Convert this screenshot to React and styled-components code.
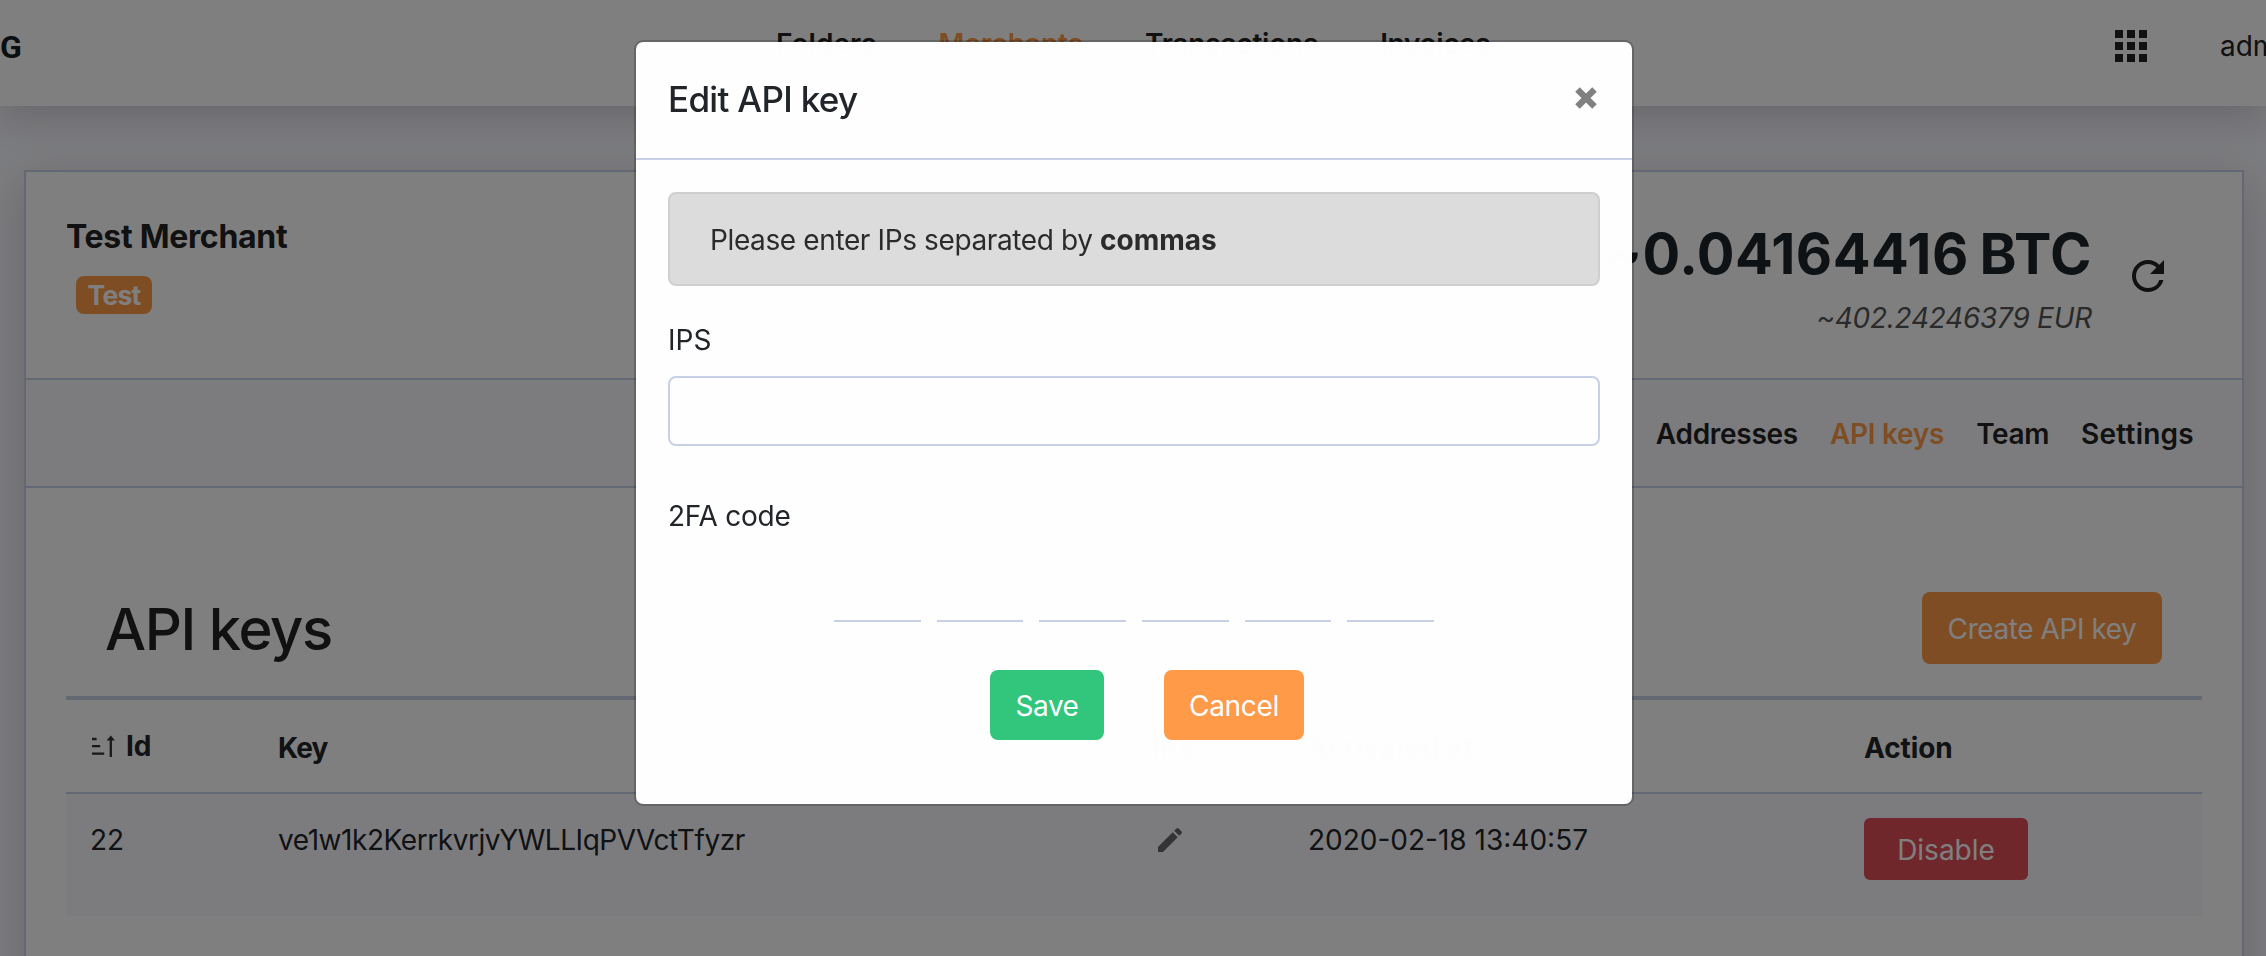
import React from "react";
import styled, { createGlobalStyle } from "styled-components";
import { MdApps, MdRefresh, MdEdit } from "react-icons/md";

const GlobalStyle = createGlobalStyle`
  * { box-sizing: border-box; }
  html, body { margin: 0; height: 100%; overflow: hidden; }
  body {
    font-family: Inter, "Liberation Sans", sans-serif;
    font-size: 28px;
    line-height: 40px;
    color: #212529;
    background: #f8f9ff;
  }
`;

const orange = "#ff9a48";
const line = "#c7d0e6";

const Page = styled.div`
  height: 956px;
  overflow: hidden;
`;

const TopBar = styled.header`
  display: grid;
  grid-template-columns: 776px 1fr 159px;
  align-items: center;
  height: 106px;
  padding-bottom: 14px;
  background: #fff;
  box-shadow: 0 8px 44px rgba(40, 20, 35, 0.21);
`;

const Brand = styled.div`
  font: 700 32px/40px Roboto, sans-serif;
  color: #161d22;
  padding-top: 2px;
`;

const Nav = styled.nav`
  display: flex;
  gap: 62px;
  margin-top: -4px;
`;

const NavLink = styled.a`
  font-weight: 600;
  color: ${(p) => (p.$active ? orange : "#222")};
  letter-spacing: ${(p) => p.$track || 0}px;
`;

const Actions = styled.div`
  display: flex;
  align-items: center;
  gap: 65px;
  overflow: hidden;
  color: #222;
  svg { flex: none; }
`;

const Card = styled.section`
  width: 2220px;
  height: 860px;
  margin: 64px 0 0 24px;
  border: 2px solid ${line};
  background: #fff;
  box-shadow: 0 14px 44px rgba(50, 20, 30, 0.2);
`;

const Summary = styled.div`
  display: flex;
  justify-content: space-between;
  height: 206px;
  padding: 0 70px 0 40px;
`;

const Merchant = styled.div`
  padding-top: 45px;
`;

const MerchantName = styled.h2`
  margin: 0 0 19px;
  font-size: 32px;
  line-height: 40px;
  font-weight: 700;
  letter-spacing: -0.3px;
  color: #222;
`;

const Badge = styled.span`
  display: block;
  width: 76px;
  height: 38px;
  margin-left: 10px;
  border-radius: 8px;
  background: ${orange};
  color: #fff;
  font-size: 26.5px;
  line-height: 38px;
  font-weight: 700;
  letter-spacing: -0.8px;
  text-align: center;
`;

const Balance = styled.div`
  display: flex;
  gap: 32px;
  color: #222;
  svg { margin-top: 80px; }
`;

const Amounts = styled.div`
  padding-top: 48px;
  text-align: right;
`;

const Btc = styled.div`
  font-size: 56px;
  line-height: 68px;
  font-weight: 700;
  color: #1e2529;
  letter-spacing: 0.5px;
  word-spacing: -3px;
`;

const Eur = styled.div`
  margin-top: 10px;
  font-style: italic;
  color: #555;
  letter-spacing: -0.26px;
`;

const Tabs = styled.nav`
  display: flex;
  align-items: center;
  justify-content: flex-end;
  gap: 32px;
  height: 110px;
  padding: 2px 48px 0 0;
  border: solid ${line};
  border-width: 2px 0;
  background: #f8f9ff;
`;

const Content = styled.div`
  padding: 0 40px;
`;

const ContentHead = styled.div`
  display: flex;
  justify-content: space-between;
  height: 208px;
  padding: 104px 40px 0 39px;
`;

const Heading = styled.h1`
  margin: 0;
  font-size: 58px;
  line-height: 74px;
  font-weight: 500;
  letter-spacing: -1.45px;
  color: #222;
`;

const Button = styled.button`
  width: ${(p) => p.$w}px;
  height: ${(p) => p.$h}px;
  padding: 2px 0 0;
  border: 0;
  border-radius: ${(p) => p.$r || 8}px;
  background: ${(p) => p.$bg};
  color: #fff;
  font: inherit;
  letter-spacing: ${(p) => p.$track || 0}px;
`;

const TableRow = styled.div`
  display: grid;
  grid-template-columns: 188px 874px 156px 556px 1fr;
`;

const HeadRow = styled(TableRow)`
  align-items: center;
  height: 98px;
  border-top: 4px solid ${line};
  border-bottom: 2px solid ${line};
  font-weight: 700;
`;

const BodyRow = styled(TableRow)`
  height: 122px;
  background: #f8f9ff;
`;

const HeadCell = styled.div`
  display: flex;
  align-items: center;
  gap: 10px;
  padding: ${(p) => (p.$sort ? 0 : 4)}px 0 0 24px;
  letter-spacing: ${(p) => p.$track || 0}px;
`;

const Cell = styled.div`
  padding: ${(p) => p.$top || 26}px 0 0 ${(p) => p.$left || 24}px;
  letter-spacing: ${(p) => p.$track || 0}px;
  svg { display: block; color: #666; }
`;

const Backdrop = styled.div`
  position: fixed;
  inset: 0;
  display: flex;
  justify-content: center;
  align-items: flex-start;
  padding: 40px 0 0 2px;
  background: rgba(0, 0, 0, 0.5);
`;

const Dialog = styled.div`
  width: 1000px;
  height: 766px;
  border: 2px solid rgba(0, 0, 0, 0.2);
  border-radius: 9px;
  background: rgba(255, 255, 255, 0.993);
  background-clip: padding-box;
`;

const DialogHead = styled.div`
  display: flex;
  align-items: center;
  justify-content: space-between;
  height: 118px;
  padding: 0 34px 2px 32px;
  border-bottom: 2px solid ${line};
`;

const DialogTitle = styled.h3`
  margin: 0;
  font-size: 35px;
  line-height: 50px;
  font-weight: 500;
  letter-spacing: -0.7px;
`;

const CloseIcon = styled.svg`
  width: 24px;
  height: 24px;
  margin-top: -2px;
  stroke: #808080;
  stroke-width: 6.4;
`;

const DialogBody = styled.div`
  padding: 32px;
`;

const Notice = styled.div`
  display: flex;
  align-items: center;
  height: 94px;
  padding: 2px 0 0 40px;
  border: 2px solid #cfcfcf;
  border-radius: 8px;
  background: #dcdcdc;
  color: #2b2b2b;
  white-space: pre;
  letter-spacing: -0.38px;
  b { letter-spacing: 0; }
`;

const Label = styled.label`
  display: block;
  margin: ${(p) => p.$gap}px 0 16px;
  letter-spacing: ${(p) => p.$track || 0}px;
`;

const Input = styled.input`
  display: block;
  width: 100%;
  height: 70px;
  border: 2px solid ${line};
  border-radius: 8px;
  background: transparent;
  outline: 0;
`;

const CodeFields = styled.div`
  display: grid;
  grid-template-columns: repeat(6, 1fr);
  gap: 16px;
  width: 600px;
  margin: 0 auto;
`;

const Digit = styled.input`
  width: 100%;
  height: 70px;
  padding: 0;
  border: 0;
  border-bottom: 2px solid ${line};
  background: transparent;
  outline: 0;
`;

const DialogActions = styled.div`
  display: flex;
  justify-content: center;
  gap: 60px;
  margin-top: 48px;
  padding-left: 26px;
`;

function SortIcon() {
  return (
    <svg width="26" height="24" viewBox="0 0 26 24" fill="none" stroke="#333" strokeWidth="2.3">
      <path d="M2 5H6.6M2 12.2H10.2M2 19.6H14.2M20.8 4V23" />
      <path d="M16.6 6.6L20.8 1.6L25 6.6Z" fill="#333" stroke="none" />
    </svg>
  );
}

export default function App() {
  return (
    <>
      <GlobalStyle />
      <Page>
        <TopBar>
          <Brand>G</Brand>
          <Nav>
            <NavLink>Folders</NavLink>
            <NavLink $active>Merchants</NavLink>
            <NavLink $track={-0.2}>Transactions</NavLink>
            <NavLink $track={-0.35}>Invoices</NavLink>
          </Nav>
          <Actions>
            <MdApps size={48} />
            <span>admin</span>
          </Actions>
        </TopBar>

        <Card>
          <Summary>
            <Merchant>
              <MerchantName>Test Merchant</MerchantName>
              <Badge>Test</Badge>
            </Merchant>
            <Balance>
              <Amounts>
                <Btc>~0.04164416 BTC</Btc>
                <Eur>~402.24246379 EUR</Eur>
              </Amounts>
              <MdRefresh size={48} />
            </Balance>
          </Summary>

          <Tabs>
            <NavLink $track={-0.28}>Addresses</NavLink>
            <NavLink $active $track={-0.28}>API keys</NavLink>
            <NavLink $track={-0.4}>Team</NavLink>
            <NavLink $track={0.25}>Settings</NavLink>
          </Tabs>

          <Content>
            <ContentHead>
              <Heading>API keys</Heading>
              <Button $w={240} $h={72} $bg={orange} $track={-0.43}>Create API key</Button>
            </ContentHead>
            <HeadRow>
              <HeadCell $sort><SortIcon />Id</HeadCell>
              <HeadCell $track={-0.8}>Key</HeadCell>
              <HeadCell>IPs</HeadCell>
              <HeadCell>Activated at</HeadCell>
              <HeadCell $track={-0.1}>Action</HeadCell>
            </HeadRow>
            <BodyRow>
              <Cell>22</Cell>
              <Cell $track={-0.45}>ve1w1k2KerrkvrjvYWLLIqPVVctTfyzr</Cell>
              <Cell $top={30} $left={26}><MdEdit size={32} /></Cell>
              <Cell>2020-02-18 13:40:57</Cell>
              <Cell $top={24}>
                <Button $w={164} $h={62} $r={6} $bg="#e04f58">Disable</Button>
              </Cell>
            </BodyRow>
          </Content>
        </Card>
      </Page>

      <Backdrop>
        <Dialog role="dialog">
          <DialogHead>
            <DialogTitle>Edit API key</DialogTitle>
            <CloseIcon viewBox="0 0 24 24">
              <path d="M3.5 3.5L20.5 20.5M20.5 3.5L3.5 20.5" />
            </CloseIcon>
          </DialogHead>
          <DialogBody>
            <Notice>Please enter IPs separated by <b>commas</b></Notice>
            <Label $gap={34}>IPS</Label>
            <Input />
            <Label $gap={50} $track={-0.25}>2FA code</Label>
            <CodeFields>
              {[0, 1, 2, 3, 4, 5].map((n) => <Digit key={n} />)}
            </CodeFields>
            <DialogActions>
              <Button $w={114} $h={70} $bg="#32c57c" $track={-0.45}>Save</Button>
              <Button $w={140} $h={70} $bg={orange} $track={-0.3}>Cancel</Button>
            </DialogActions>
          </DialogBody>
        </Dialog>
      </Backdrop>
    </>
  );
}
